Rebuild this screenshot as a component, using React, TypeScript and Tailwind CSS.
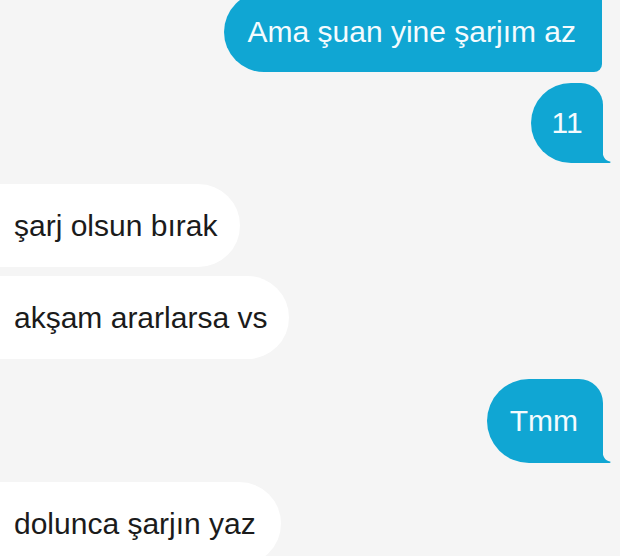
import React from "react";

const BLUE = "#10a6d3";

function Tail() {
  return (
    <svg
      className="absolute right-[-8px] bottom-0"
      width="9"
      height="15"
      viewBox="0 0 9 15"
    >
      <path d="M0 0 C0.5 9 3 12.5 8 13.6 C9 13.9 8.6 15 7.6 15 L0 15 Z" fill={BLUE} />
    </svg>
  );
}

export default function App() {
  return (
    <div className="w-[620px] h-[556px] overflow-hidden bg-[#f5f5f5] font-['Liberation_Sans',Arial,sans-serif] text-[30px]">
      <div className="flex flex-col mt-[-8px]">
        <div className="flex justify-end pr-[18px]">
          <div className="h-[80px] flex items-center pl-[24px] pr-[26px] bg-[#10a6d3] text-[#f4fbfe] rounded-l-[40px] rounded-br-[8px] leading-none">
            Ama şuan yine şarjım az
          </div>
        </div>
        <div className="flex justify-end pr-[17px] mt-[11px]">
          <div className="relative h-[80px] w-[72px] flex items-center justify-center bg-[#10a6d3] text-[#f4fbfe] rounded-l-[40px] rounded-tr-[22px] leading-none">
            11
            <Tail />
          </div>
        </div>
        <div className="flex justify-start mt-[21px]">
          <div className="h-[83px] flex items-center ml-[-40px] pl-[54px] pr-[23px] bg-white text-[#1b1b1b] rounded-[42px] leading-none">
            şarj olsun bırak
          </div>
        </div>
        <div className="flex justify-start mt-[9px]">
          <div className="h-[83px] flex items-center ml-[-40px] pl-[54px] pr-[22px] bg-white text-[#1b1b1b] rounded-[42px] leading-none">
            akşam ararlarsa vs
          </div>
        </div>
        <div className="flex justify-end pr-[17px] mt-[20px]">
          <div className="relative h-[84px] flex items-center pl-[23px] pr-[25px] bg-[#10a6d3] text-[#f4fbfe] rounded-l-[42px] rounded-tr-[24px] leading-none">
            Tmm
            <Tail />
          </div>
        </div>
        <div className="flex justify-start mt-[19px]">
          <div className="h-[83px] flex items-center ml-[-40px] pl-[54px] pr-[25px] bg-white text-[#1b1b1b] rounded-[42px] leading-none">
            dolunca şarjın yaz
          </div>
        </div>
      </div>
    </div>
  );
}
